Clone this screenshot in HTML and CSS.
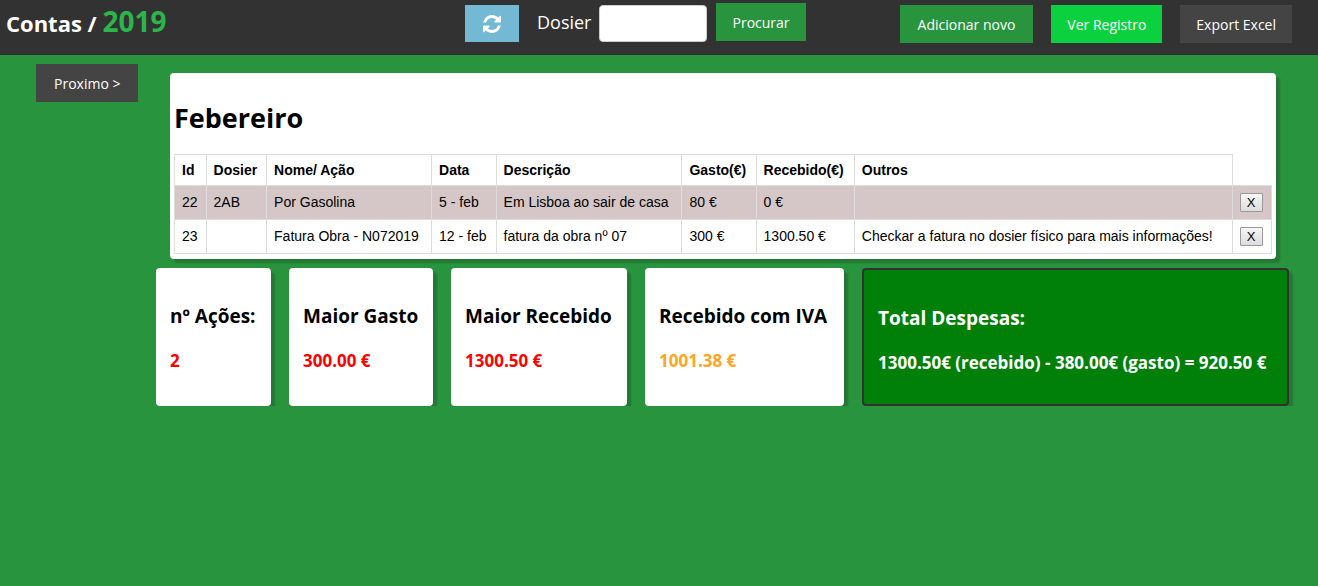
FILE: index.html
```html
<!DOCTYPE html>
<html lang="pt">
<head>
<meta charset="utf-8">
<title>Contas / 2019</title>
<meta name="viewport" content="width=device-width, initial-scale=1">
<link rel="stylesheet" href="styles.css">
</head>
<body>
<header class="topbar">
  <h1 class="brand">Contas / <span class="brand-year">2019</span></h1>
  <div class="toolbar">
    <form class="search">
      <button class="btn btn-refresh" type="button" aria-label="Atualizar">
        <svg class="icon" viewBox="0 0 1536 1536" aria-hidden="true"><path fill="currentColor" d="M1511 928q0 5-1 7-64 268-268 434.500T764 1536q-146 0-282.500-55T238 1324l-129 129q-19 19-45 19t-45-19-19-45V960q0-26 19-45t45-19h448q26 0 45 19t19 45-19 45l-137 137q71 66 161 102t187 36q134 0 250-65t186-179q11-17 53-117 8-23 30-23h192q13 0 22.500 9.500t9.500 22.500zm25-800v448q0 26-19 45t-45 19h-448q-26 0-45-19t-19-45 19-45l138-138Q969 256 768 256q-134 0-250 65T332 500q-11 17-53 117-8 23-30 23H50q-13 0-22.500-9.500T18 608v-7q65-268 270-434.500T768 0q146 0 284 55.500T1297 212l130-129q19-19 45-19t45 19 19 45z"/></svg>
      </button>
      <label class="search-label" for="dosier">Dosier</label>
      <input class="search-input" id="dosier" type="text">
      <button class="btn btn-compact" type="button">Procurar</button>
    </form>
    <nav class="actions">
      <button class="btn" type="button">Adicionar novo</button>
      <button class="btn btn-compact btn-bright" type="button">Ver Registro</button>
      <button class="btn btn-compact btn-dark" type="button">Export Excel</button>
    </nav>
  </div>
</header>
<div class="page">
  <aside class="side">
    <button class="btn btn-dark" type="button">Proximo &gt;</button>
  </aside>
  <main class="main">
    <section class="month">
      <h2 class="month-title">Febereiro</h2>
      <table class="entries">
        <thead>
          <tr><th>Id</th><th>Dosier</th><th>Nome/ Ação</th><th>Data</th><th>Descrição</th><th>Gasto(€)</th><th>Recebido(€)</th><th>Outros</th></tr>
        </thead>
        <tbody>
          <tr><td>22</td><td>2AB</td><td>Por Gasolina</td><td>5 - feb</td><td>Em Lisboa ao sair de casa</td><td>80 €</td><td>0 €</td><td></td><td><button class="delete" type="button">X</button></td></tr>
          <tr><td>23</td><td></td><td>Fatura Obra - N072019</td><td>12 - feb</td><td>fatura da obra nº 07</td><td>300 €</td><td>1300.50 €</td><td>Checkar a fatura no dosier físico para mais informações!</td><td><button class="delete" type="button">X</button></td></tr>
        </tbody>
      </table>
    </section>
    <section class="cards">
      <article class="card"><h3 class="card-title">nº Ações:</h3><p class="card-value">2</p></article>
      <article class="card"><h3 class="card-title">Maior Gasto</h3><p class="card-value">300.00 €</p></article>
      <article class="card"><h3 class="card-title">Maior Recebido</h3><p class="card-value">1300.50 €</p></article>
      <article class="card"><h3 class="card-title">Recebido com IVA</h3><p class="card-value card-value-tax">1001.38 €</p></article>
      <article class="card card-total"><h3 class="card-title">Total Despesas:</h3><p class="card-value">1300.50€ (recebido) - 380.00€ (gasto) = 920.50 €</p></article>
    </section>
  </main>
</div>
</body>
</html>
```
FILE: styles.css
```css
* { box-sizing: border-box; }

body {
  margin: 0;
  background: #28953e;
  color: #000;
  font-family: "Open Sans", "Noto Sans", sans-serif;
}

h1, h2, h3, p { margin: 0; }

.topbar {
  display: grid;
  grid-template-columns: 459fr 827fr;
  min-height: 55px;
  padding: 0 26px 0 6px;
  background: #323232;
  color: #fff;
}

.brand {
  padding-top: 2px;
  font-size: 22px;
  line-height: 38px;
  white-space: nowrap;
}

.brand-year {
  color: #2bb54b;
  font-size: 28px;
}

.toolbar {
  display: flex;
  justify-content: space-between;
  align-items: flex-start;
}

.search {
  display: flex;
  align-items: flex-start;
  padding-top: 3px;
}

.btn {
  height: 38px;
  padding: 2px 18px 0;
  border: 0;
  background: #28953e;
  color: #fff;
  font-family: inherit;
  font-size: 14px;
  line-height: 20px;
  white-space: nowrap;
}

.btn-compact {
  padding-right: 16px;
  padding-left: 16px;
}

.btn-refresh {
  display: grid;
  place-items: center;
  width: 54px;
  height: 37px;
  margin-top: 2px;
  padding: 0;
  background: #73b9d4;
}

.icon { width: 18px; height: 18px; }

.search-label {
  margin: 0 8px 0 18px;
  font-size: 18px;
  line-height: 38px;
}

.search-input {
  width: 108px;
  height: 37px;
  margin: 2px 9px 0 0;
  padding: 0 8px;
  border: 1px solid #ccc;
  border-radius: 4px;
  background: #fff;
  font-size: 14px;
}

.actions {
  display: flex;
  gap: 18px;
  padding-top: 5px;
}

.btn-bright { background: #0bd13e; }
.btn-dark { background: #444; }

.page {
  display: grid;
  grid-template-columns: 156px 1fr;
  padding-right: 29px;
}

.side { padding: 9px 0 0 36px; }

.main {
  min-width: 0;
  padding-top: 18px;
}

.month {
  margin: 0 13px 0 14px;
  padding: 24px 4px 5px;
  border-radius: 4px;
  background: #fff;
  box-shadow: 4px 4px 2px rgba(30, 30, 30, 0.25);
}

.month-title {
  margin-bottom: 15px;
  font-size: 27px;
  line-height: 42px;
}

.entries {
  width: 100%;
  border-collapse: collapse;
  font-family: "Liberation Sans", Arial, sans-serif;
  font-size: 14px;
  line-height: 17px;
}

.entries th,
.entries td {
  padding: 0 7px;
  border: 1px solid #ddd;
  text-align: left;
  white-space: nowrap;
}

.entries th { height: 31px; }
.entries td { height: 34px; }
.entries tbody tr:nth-child(odd) { background: #d5c7c7; }

.delete {
  display: block;
  width: 23px;
  height: 19px;
  padding: 0;
  border: 1px solid #999;
  border-radius: 1px;
  background: linear-gradient(#f6f6f6, #ddd);
  color: #000;
  font-family: inherit;
  font-size: 13px;
  line-height: 17px;
}

.cards {
  display: grid;
  grid-template-columns: 115fr 144fr 176fr 199fr 427fr;
  gap: 18px;
  margin-top: 9px;
}

.card {
  min-width: 0;
  padding: 34px 14px 33px;
  border-radius: 4px;
  background: #fff;
  box-shadow: 4px 4px 2px rgba(30, 30, 30, 0.25);
  white-space: nowrap;
}

.card-title {
  margin-bottom: 19px;
  font-size: 19px;
  line-height: 28px;
}

.card-value {
  color: #f00;
  font-size: 17px;
  font-weight: 700;
  line-height: 24px;
}

.card-value-tax { color: #ffa51f; }

.card-total {
  padding-bottom: 29px;
  border: 2px solid #323232;
  background: #008009;
  color: #fff;
}

.card-total .card-value { color: #fff; }
```
